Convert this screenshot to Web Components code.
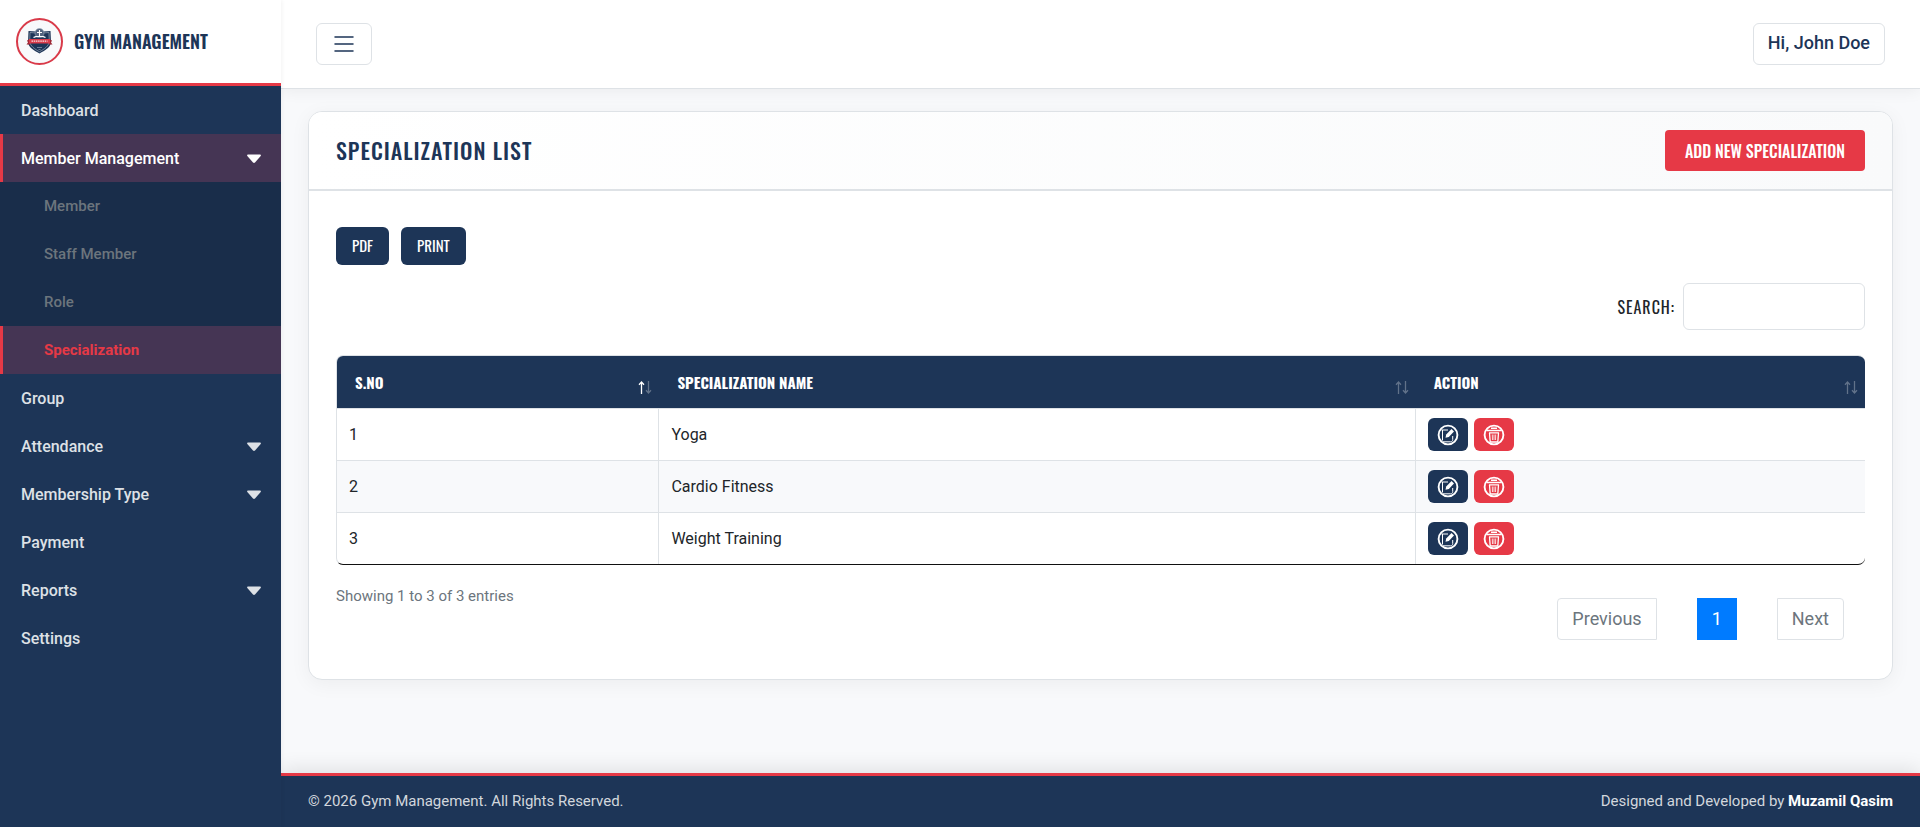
<!DOCTYPE html>
<html lang="en">
<head>
<meta charset="utf-8">
<meta name="viewport" content="width=device-width, initial-scale=1">
<title>Gym Management - Specialization List</title>
<style>
    :root {
        --navy: #1d3557;
        --red: #e63946;
        --line: #dee2e6;
        --page: #f8f9fb;
        --heading: Oswald, "Roboto Condensed", "Liberation Sans", sans-serif;
    }

    body {
        margin: 0;
        font: 16px/24px Roboto, "Liberation Sans", sans-serif;
        color: #212529;
        background: var(--page);
    }

    page-footer b {
        color: #fff;
    }
</style>
</head>
<body>

<app-shell>
    <side-bar slot="sidebar">
        <nav-item>Dashboard</nav-item>
        <nav-item active caret>Member Management</nav-item>
        <nav-item sub>Member</nav-item>
        <nav-item sub>Staff Member</nav-item>
        <nav-item sub>Role</nav-item>
        <nav-item sub active>Specialization</nav-item>
        <nav-item>Group</nav-item>
        <nav-item caret>Attendance</nav-item>
        <nav-item caret>Membership Type</nav-item>
        <nav-item>Payment</nav-item>
        <nav-item caret>Reports</nav-item>
        <nav-item>Settings</nav-item>
    </side-bar>
    <top-bar slot="topbar">Hi, John Doe</top-bar>
    <list-card>
        <span slot="title">SPECIALIZATION LIST</span>
        <span slot="add">ADD NEW SPECIALIZATION</span>
        <data-table rows="Yoga|Cardio Fitness|Weight Training"></data-table>
    </list-card>
    <page-footer slot="footer">
        © 2026 Gym Management. All Rights Reserved.
        <span slot="credit">Designed and Developed by <b>Muzamil Qasim</b></span>
    </page-footer>
</app-shell>

<template id="app-shell">
    <style>
        :host {
            display: grid;
            grid-template-columns: 281px minmax(0, 1fr);
            min-height: 100vh;
        }

        .page {
            display: flex;
            flex-direction: column;
        }

        main {
            flex: 1;
            padding: 22px 27px 32px;
        }
    </style>
    <slot name="sidebar"></slot>
    <div class="page">
        <slot name="topbar"></slot>
        <main><slot></slot></main>
        <slot name="footer"></slot>
    </div>
</template>

<template id="side-bar">
    <style>
        /* Stacked above the page so the footer shadow stays off the menu */
        :host {
            display: block;
            position: relative;
            z-index: 1;
            background: var(--navy);
            box-shadow: 1px 0 4px rgba(0, 0, 0, .05);
        }

        .brand {
            display: flex;
            align-items: center;
            gap: 11px;
            height: 83px;
            padding: 0 16px;
            background: #fff;
            border-bottom: 3px solid var(--red);
            color: var(--navy);
            font: 600 18px/24px var(--heading);
            text-decoration: none;
        }

        .brand span {
            padding-bottom: 2px;
        }
    </style>
    <a class="brand" href="#">
        <svg width="47" height="47" viewBox="0 0 47 47" aria-hidden="true">
            <circle cx="23.5" cy="23.5" r="22.5" fill="#f8f9fb" stroke="#d93a49" stroke-width="2"/>
            <path d="M23.5 12 27 13.5l7.5-.5.5 11.5c-.8 5-6 8-11.5 11C18 32.5 12.8 29.5 12 24.5l.5-11.5L20 13.5z" fill="#1d3557"/>
            <path d="M23.5 13.5 26.5 15l6.500-.5.3 9c-.6 4.600-5 7.600-9.800 10.200-4.800-2.600-9.200-5.600-9.800-10.200l.3-9 6.500.5z" fill="none" stroke="#9aa7b8" stroke-width=".7"/>
            <circle cx="23.5" cy="15" r="4.5" fill="#51637e" stroke="#9aa7b8" stroke-width=".6"/>
            <path d="M23.5 12v7M21 14.5h5M17.5 19.5c2-1.5 10-1.5 12 0" fill="none" stroke="#fff" stroke-width="1.1"/>
            <path d="M11 22.5l3-1.5v5.5h-3.500l1.500-2zM36 22.5l-3-1.5v5.5h3.500l-1.500-2z" fill="#9e2735"/>
            <path d="M13 21h21v4.5H13z" fill="#d93a49"/>
            <path d="M15.5 23.2h16" stroke="#f6dfe1" stroke-width="1.3" stroke-dasharray="1.5 .7"/>
            <path d="M21 29.5h5M22.5 31.5h2" stroke="#7f90a8" stroke-width=".8"/>
        </svg>
        <span>GYM MANAGEMENT</span>
    </a>
    <nav><slot></slot></nav>
</template>

<template id="nav-item">
    <style>
        :host {
            display: block;
        }

        a {
            display: flex;
            align-items: center;
            justify-content: space-between;
            box-sizing: border-box;
            height: 48px;
            padding: 2px 20px 0 21px;
            color: #dde1e6;
            font-weight: 500;
            text-decoration: none;
        }

        svg {
            display: none;
        }

        :host([caret]) svg {
            display: block;
        }

        :host([sub]) a {
            padding: 0 20px 0 44px;
            background: #192d4a;
            color: #6c757d;
            font-size: 15px;
        }

        :host([active]) a {
            background: #453554;
            box-shadow: inset 3px 0 var(--red);
            color: #fff;
        }

        :host([sub][active]) a {
            color: var(--red);
            font-weight: 700;
        }
    </style>
    <a href="#">
        <span><slot></slot></span>
        <svg width="14" height="10" viewBox="0 0 14 10" aria-hidden="true">
            <path d="M1 .5h12c.8 0 1.2.8.7 1.4L8 8.6c-.6.6-1.4.6-2 0L.3 1.9C-.2 1.3.2.5 1 .5z" fill="currentColor"/>
        </svg>
    </a>
</template>

<template id="top-bar">
    <style>
        :host {
            display: flex;
            align-items: center;
            justify-content: space-between;
            height: 88px;
            padding: 0 35px;
            background: #fff;
            border-bottom: 1px solid var(--line);
            box-shadow: 0 2px 15px rgba(0, 0, 0, .06);
        }

        button {
            display: flex;
            align-items: center;
            justify-content: center;
            box-sizing: border-box;
            height: 42px;
            padding: 0 14px 2px;
            background: #fff;
            border: 1px solid var(--line);
            border-radius: 6px;
            color: var(--navy);
            font: 500 18px/24px Roboto, "Liberation Sans", sans-serif;
        }

        .toggle {
            width: 56px;
            padding-bottom: 0;
        }
    </style>
    <button class="toggle" aria-label="Toggle menu">
        <svg width="20" height="16" viewBox="0 0 20 16" aria-hidden="true">
            <path d="M1 1h18M1 8h18M1 15h18" fill="none" stroke="currentColor" stroke-width="1.5" stroke-linecap="round"/>
        </svg>
    </button>
    <button><slot></slot></button>
</template>

<template id="list-card">
    <style>
        :host {
            display: block;
            background: #fff;
            border: 1px solid var(--line);
            border-radius: 14px;
            box-shadow: 0 4px 20px rgba(0, 0, 0, .05);
            overflow: hidden;
        }

        header {
            display: flex;
            align-items: center;
            justify-content: space-between;
            height: 77px;
            padding: 0 27px;
            background: linear-gradient(90deg, #fff, #f9fafb);
            border-bottom: 2px solid var(--line);
        }

        h1 {
            margin: 0;
            padding-bottom: 2px;
            color: var(--navy);
            font: 500 22px/32px var(--heading);
            letter-spacing: 1px;
        }

        button {
            border: 0;
            color: #fff;
            font: 400 15px/20px var(--heading);
        }

        .add {
            padding: 9px 20px 8px;
            border-radius: 4px;
            background: var(--red);
            font-size: 16px;
            font-weight: 500;
            line-height: 24px;
        }

        .body {
            padding: 36px 27px 39px;
        }

        .exports {
            display: flex;
            gap: 12px;
        }

        .exports button {
            padding: 8px 16px 10px;
            border-radius: 6px;
            background: var(--navy);
        }

        .search {
            display: flex;
            align-items: center;
            justify-content: flex-end;
            gap: 8px;
            margin: 18px 0 25px;
        }

        label {
            font: 16px/24px var(--heading);
            letter-spacing: 1px;
        }

        input {
            box-sizing: border-box;
            width: 182px;
            height: 47px;
            padding: 0 12px;
            border: 1px solid var(--line);
            border-radius: 6px;
            background: #fff;
            font: inherit;
        }

        .summary {
            display: flex;
            align-items: flex-start;
            justify-content: space-between;
        }

        .info {
            padding-top: 21px;
            color: #6c757d;
            font-size: 15px;
            line-height: 20px;
        }

        .pages {
            display: flex;
            gap: 40px;
            padding: 33px 21px 0 0;
        }

        .pages a {
            padding: 8px 14px;
            border: 1px solid var(--line);
            color: #6c757d;
            font-size: 18px;
            line-height: 24px;
            text-decoration: none;
        }

        .pages a:first-child {
            border-radius: 4px 0 0 4px;
        }

        .pages a:last-child {
            border-radius: 0 4px 4px 0;
        }

        .pages .current {
            border-color: #007bff;
            background: #007bff;
            color: #fff;
        }
    </style>
    <header>
        <h1><slot name="title"></slot></h1>
        <button class="add"><slot name="add"></slot></button>
    </header>
    <div class="body">
        <div class="exports">
            <button>PDF</button>
            <button>PRINT</button>
        </div>
        <div class="search">
            <label for="search">SEARCH:</label>
            <input id="search" type="search">
        </div>
        <slot></slot>
        <div class="summary">
            <div class="info">Showing 1 to 3 of 3 entries</div>
            <nav class="pages" aria-label="Pages">
                <a href="#">Previous</a>
                <a class="current" href="#">1</a>
                <a href="#">Next</a>
            </nav>
        </div>
    </div>
</template>

<template id="data-table">
    <style>
        :host {
            display: block;
            border-top: 1px solid var(--line);
            border-left: 1px solid var(--line);
            border-bottom: 1px solid #111;
            border-radius: 7px;
            overflow: hidden;
        }

        table {
            width: 100%;
            table-layout: fixed;
            border-spacing: 0;
        }

        th, td {
            box-sizing: border-box;
            height: 52px;
            padding: 0 12px;
            border-bottom: 1px solid var(--line);
            text-align: left;
        }

        th {
            height: 53px;
            padding: 0 7px 0 18px;
            background: var(--navy);
            color: #fff;
            font: 700 15px/20px var(--heading);
        }

        th:first-child {
            width: 21.1%;
        }

        th:nth-child(2) {
            width: 49.5%;
        }

        .head {
            display: flex;
            align-items: center;
            justify-content: space-between;
        }

        .head svg {
            padding-top: 10px;
        }

        td:not(:last-child) {
            border-right: 1px solid var(--line);
        }

        tr:nth-child(even) td {
            background: var(--page);
        }

        tbody tr:last-child td {
            height: 51px;
            border-bottom: 0;
        }

        .actions {
            display: flex;
            gap: 6px;
        }

        .actions button {
            display: flex;
            align-items: center;
            justify-content: center;
            width: 40px;
            height: 33px;
            padding: 0;
            border: 0;
            border-radius: 6px;
            background: var(--navy);
            color: #fff;
        }

        .actions .delete {
            background: var(--red);
        }
    </style>
    <table>
        <thead><tr></tr></thead>
        <tbody></tbody>
    </table>
</template>

<template id="page-footer">
    <style>
        :host {
            display: flex;
            align-items: center;
            justify-content: space-between;
            box-sizing: border-box;
            height: 54px;
            padding: 0 27px 2px;
            background: var(--navy);
            border-top: 3px solid var(--red);
            box-shadow: 0 -4px 20px rgba(0, 0, 0, .1);
            color: #d2d7dd;
            font-size: 15px;
        }
    </style>
    <span><slot></slot></span>
    <slot name="credit"></slot>
</template>

<script>
    // Base class: clones the template named like the tag
    class TemplateElement extends HTMLElement {
        constructor() {
            super();
            const template = document.getElementById(this.localName);
            this.attachShadow({ mode: 'open' });
            this.shadowRoot.appendChild(template.content.cloneNode(true));
        }
    }

    const editIcon = `
        <svg width="22" height="22" viewBox="0 0 22 22" fill="none" stroke="currentColor" aria-hidden="true">
            <circle cx="11" cy="11" r="9.4" stroke-width="1.9"/>
            <path d="M11 6H4.500M5.500 6v10.500M6 17.800h7.500c1.500 0 2.200-.8 2.200-2.200V12" stroke-width="1"/>
            <path d="M8.500 13.800l.7-3.300 5.300-5.500 2.500 2.400-5.200 5.500z" fill="currentColor" stroke="none"/>
        </svg>`;

    const trashIcon = `
        <svg width="22" height="22" viewBox="0 0 22 22" fill="none" stroke="currentColor" aria-hidden="true">
            <circle cx="11" cy="11" r="9.4" stroke-width="1.9"/>
            <path d="M4 6.500h14M8 4.300h6" stroke-width="1.500"/>
            <path d="M6 8.800h10M6.500 9l.7 9h7.600l.7-9" stroke-width="1.300"/>
            <path d="M9.300 10.500l.2 5.500M11 10.500v5.500M12.700 10.500l-.2 5.500" stroke-width=".8"/>
        </svg>`;

    // One arrow is bright when the column is sorted that way
    const sortIcon = sorted => `
        <svg width="14" height="13" viewBox="0 0 14 13" fill="none" stroke="#fff" aria-hidden="true">
            <path d="M3.5 13V1M1 3.7L3.5 1 6 3.7" stroke-width="1.3" opacity="${sorted ? 1 : .3}"/>
            <path d="M10.5 0v12M8 9.3l2.5 2.7L13 9.3" stroke-width="1.3" opacity=".3"/>
        </svg>`;

    class DataTable extends TemplateElement {
        connectedCallback() {
            const columns = ['S.NO', 'SPECIALIZATION NAME', 'ACTION'];
            const rows = this.getAttribute('rows').split('|');

            this.shadowRoot.querySelector('thead tr').innerHTML = columns.map((name, i) => `
                <th><div class="head"><span>${name}</span>${sortIcon(i === 0)}</div></th>
            `).join('');

            this.shadowRoot.querySelector('tbody').innerHTML = rows.map((name, i) => `
                <tr>
                    <td>${i + 1}</td>
                    <td>${name}</td>
                    <td>
                        <div class="actions">
                            <button aria-label="Edit ${name}">${editIcon}</button>
                            <button class="delete" aria-label="Delete ${name}">${trashIcon}</button>
                        </div>
                    </td>
                </tr>
            `).join('');
        }
    }

    customElements.define('app-shell', class extends TemplateElement {});
    customElements.define('side-bar', class extends TemplateElement {});
    customElements.define('nav-item', class extends TemplateElement {});
    customElements.define('top-bar', class extends TemplateElement {});
    customElements.define('list-card', class extends TemplateElement {});
    customElements.define('data-table', DataTable);
    customElements.define('page-footer', class extends TemplateElement {});
</script>
</body>
</html>
